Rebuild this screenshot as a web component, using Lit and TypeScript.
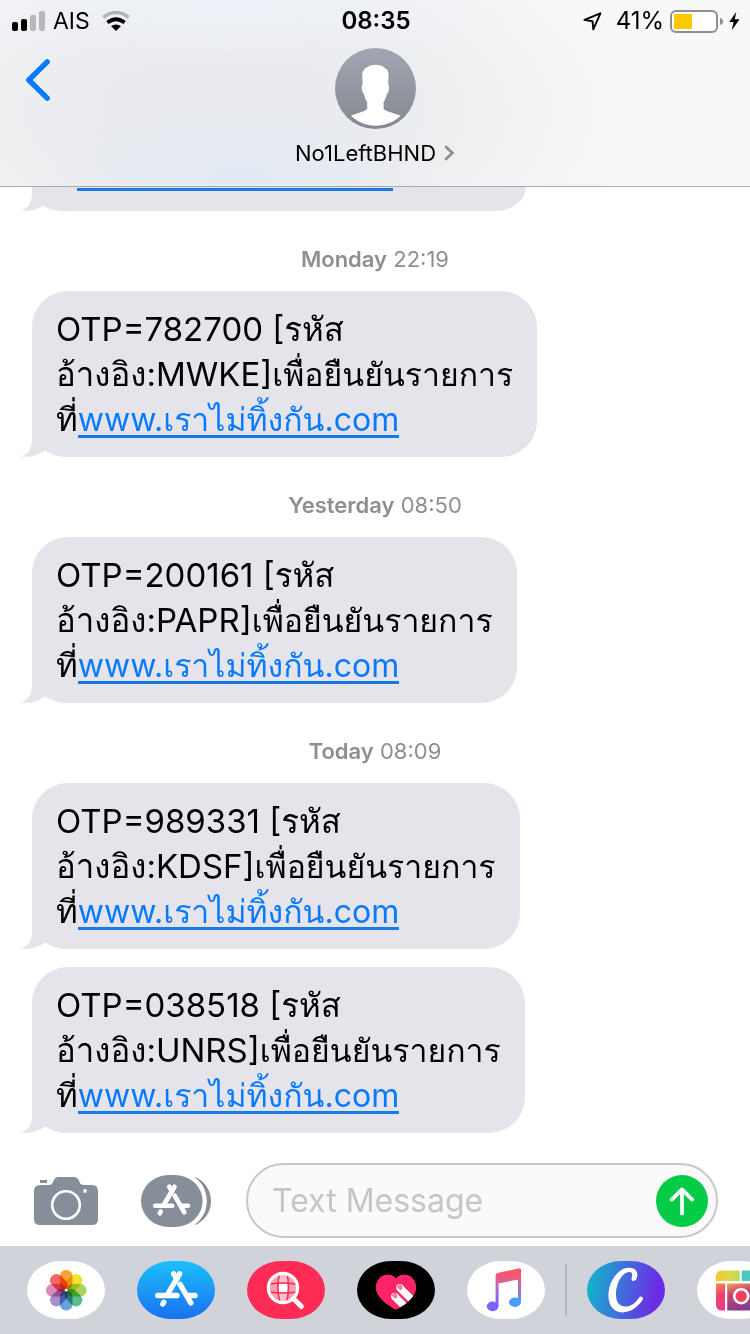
import { LitElement, html, css, svg } from "lit";
import { customElement, property } from "lit/decorators.js";

interface Message {
  otp: string;
  code: string;
}

interface Group {
  day: string;
  time: string;
  messages: Message[];
}

const LINK = "www.เราไม่ทิ้งกัน.com";

const GROUPS: Group[] = [
  { day: "Monday", time: "22:19", messages: [{ otp: "782700", code: "MWKE" }] },
  { day: "Yesterday", time: "08:50", messages: [{ otp: "200161", code: "PAPR" }] },
  {
    day: "Today",
    time: "08:09",
    messages: [
      { otp: "989331", code: "KDSF" },
      { otp: "038518", code: "UNRS" },
    ],
  },
];

const storeGlyph = svg`
  <g fill="none" stroke="#fff" stroke-width="5" stroke-linecap="round">
    <path d="M22.5 11.5 L11.8 29.6 M16.8 11.5 L20 16.5 M22.8 21.3 L33 39" />
    <path d="M1.8 32 H20 M29.6 32 H37" />
    <path d="M7.6 38.3 L6.6 40" />
  </g>`;

const bubbleTail = html`
  <svg class="tail" width="50" height="40" viewBox="0 0 50 40" aria-hidden="true">
    <path
      fill="#e5e4ea"
      d="M11 0 V22 C11 31 8 37 0 39.4 C9 41 18 38 24 33.2 C31 38 38 40 50 40 V0 Z"
    />
  </svg>
`;

const bubbleStyles = css`
  .bubble {
    position: relative;
    isolation: isolate;
    box-sizing: border-box;
    border-radius: 36px;
    background: #e5e4ea;
    color: #000;
  }
  .tail {
    position: absolute;
    z-index: -1;
    left: -11px;
    bottom: 0;
    display: block;
  }
`;

const PETALS = [
  "#f79a1e",
  "#eee21a",
  "#a4cf4a",
  "#4eb87e",
  "#5a9be0",
  "#a283c8",
  "#d880b4",
  "#f25a58",
];

@customElement("message-bubble")
export class MessageBubble extends LitElement {
  @property() otp = "";
  @property() code = "";

  static styles = [
    bubbleStyles,
    css`
      :host {
        display: block;
        width: fit-content;
        max-width: 80%;
      }
      .bubble {
        padding: 16px 24px 15px;
        font-size: 33px;
        line-height: 45px;
      }
      .text {
        margin: 0;
        white-space: nowrap;
      }
      .thai {
        font-size: 32px;
      }
      .link {
        color: #087aff;
        font-size: 32px;
        text-decoration: none;
        background: linear-gradient(#1679e4, #1679e4) left 0 bottom 1px / 100% 3px no-repeat;
      }
    `,
  ];

  render() {
    return html`
      <div class="bubble">
        ${bubbleTail}
        <p class="text">
          OTP=${this.otp} [รหัส<br />อ้างอิง:${this.code}]<span class="thai">เพื่อยืนยันรายการ</span
          ><br />ที่<a class="link" href="#">${LINK}</a>
        </p>
      </div>
    `;
  }
}

@customElement("status-bar")
export class StatusBar extends LitElement {
  static styles = css`
    :host {
      display: grid;
      grid-template-columns: 1fr auto 1fr;
      align-items: center;
      padding: 0 10px 0 12px;
      font-size: 24px;
      line-height: 42px;
    }
    .side {
      display: flex;
      align-items: center;
      gap: 8px;
    }
    .carrier {
      font-size: 23px;
    }
    .end {
      justify-content: flex-end;
      gap: 6px;
    }
    .time {
      font-weight: 600;
    }
    .wifi {
      margin-left: 4px;
    }
    .location {
      margin-right: 8px;
    }
    svg {
      display: block;
      flex: none;
    }
  `;

  render() {
    return html`
      <div class="side">
        <svg width="33" height="20" viewBox="0 0 33 20" role="img" aria-label="Signal">
          <rect x="0" y="11" width="6" height="9" rx="2" />
          <rect x="9" y="8" width="6" height="12" rx="2" />
          <rect x="18" y="4" width="6" height="16" rx="2" fill="#b7b8bb" />
          <rect x="27" y="0" width="6" height="20" rx="2" fill="#b7b8bb" />
        </svg>
        <span class="carrier">AIS</span>
        <svg class="wifi" width="28" height="20" viewBox="0 0 28 20" role="img" aria-label="Wi-Fi">
          <path d="M1.2 6.2 Q14 -3.2 26.8 6.2" fill="none" stroke="#b2b3b6" stroke-width="3.6" />
          <path d="M5.4 11.6 Q14 4.8 22.6 11.6" fill="none" stroke="#000" stroke-width="3.8" />
          <path d="M9 15 Q14 11.8 19 15 L14 20 Z" />
        </svg>
      </div>
      <span class="time">08:35</span>
      <div class="side end">
        <svg class="location" width="19" height="19" viewBox="0 0 19 19" role="img" aria-label="Location">
          <path
            d="M1.4 7.9 L17.4 1.3 L10.3 17.3 L9.5 9.2 Z"
            fill="none"
            stroke="#000"
            stroke-width="1.9"
            stroke-linejoin="round"
          />
        </svg>
        <span>41%</span>
        <svg width="53" height="23" viewBox="0 0 53 23" role="img" aria-label="Battery">
          <rect x="1" y="1" width="46" height="21" rx="5" fill="#fff" stroke="#8e8e90" stroke-width="2" />
          <rect x="4" y="4" width="18" height="15" fill="#fdca00" />
          <path d="M50 8 Q53 9 53 11.5 Q53 14 50 15 Z" fill="#8e8e90" />
        </svg>
        <svg width="11" height="20" viewBox="0 0 12 20" role="img" aria-label="Charging">
          <path d="M8 0 L0.3 11 H5 L3 20 L11.5 8 H6.3 Z" />
        </svg>
      </div>
    `;
  }
}

@customElement("app-dock")
export class AppDock extends LitElement {
  static styles = css`
    :host {
      display: flex;
      align-items: center;
      box-sizing: border-box;
      height: 88px;
      padding-left: 27px;
      background: #d0d3d9;
      overflow: hidden;
    }
    .group {
      display: flex;
      gap: 32px;
    }
    .divider {
      flex: none;
      width: 2px;
      height: 52px;
      margin: 0 20px;
      background: #b4b7bd;
    }
    .app {
      flex: none;
      display: block;
      width: 78px;
      height: 58px;
      padding: 0;
      border: 0;
      border-radius: 34px / 29px;
      overflow: hidden;
      background: #fff;
    }
    .store {
      background: linear-gradient(#1cc1f8, #1a70f2);
    }
    .search {
      background: #ff2d55;
    }
    .touch {
      background: #000;
    }
    .canva {
      background: linear-gradient(100deg, #12b4cc 5%, #3f6fdc 45%, #6c2be4 85%);
    }
    .petal {
      mix-blend-mode: multiply;
    }
    svg {
      display: block;
    }
  `;

  render() {
    return html`
      <div class="group">
        <button class="app" aria-label="Photos">
          <svg width="78" height="58" viewBox="0 0 78 58">
            ${PETALS.map(
              (c, i) => svg`<rect class="petal" x="32.9" y="9" width="12.6" height="19.6" rx="6"
                fill=${c} fill-opacity="0.92" transform=${`rotate(${i * 45} 39.2 29.2)`} />`
            )}
            <circle cx="39.2" cy="29.2" r="1.4" fill="#fff" />
          </svg>
        </button>
        <button class="app store" aria-label="App Store">
          <svg width="78" height="58" viewBox="0 0 78 58">
            <g transform="translate(18.8 0.6) scale(1.06)">${storeGlyph}</g>
          </svg>
        </button>
        <button class="app search" aria-label="Image search">
          <svg width="78" height="58" viewBox="0 0 78 58">
            <circle cx="36" cy="27" r="14" fill="#ff9fb3" />
            <path d="M31 22.7 H41 V13 H31 Z M31 31.3 H41 V41 H31 Z" fill="#ffc0cd" />
            <path d="M31.8 22.7 H40.8 V31.3 H31 Z" fill="#fff" />
            <g fill="none" stroke="#ff2d55" stroke-width="1.6">
              <path d="M22 23.4 Q36 20.5 50 23.4 M22 31 Q36 33 50 31" />
              <path d="M32.6 12 Q29 27 33 42 M40 12 Q43 27 39.6 42" />
            </g>
            <circle cx="36" cy="27" r="14.6" fill="none" stroke="#fff" stroke-width="3.2" />
            <path d="M46.6 37.8 L54.4 45.6" stroke="#fff" stroke-width="5" stroke-linecap="round" />
          </svg>
        </button>
        <button class="app touch" aria-label="Digital Touch">
          <svg width="78" height="58" viewBox="0 0 78 58">
            <defs>
              <clipPath id="heart">
                <path
                  d="M39 17.6 C42 13.2 48 12.6 52 14.6 C58 17.6 61 25.5 58 32 C54.5 39 47 44.5 39 48.8 C31 44.5 23.5 39 20 32 C17 25.5 20 17.6 26 14.6 C30 12.6 36 13.2 39 17.6 Z"
                />
              </clipPath>
            </defs>
            <g clip-path="url(#heart)">
              <rect width="78" height="58" fill="#ff2468" />
              <path d="M43 27 L58 42 M37.8 35.6 L52 49.8" stroke="#fff" stroke-width="7.4" />
              <circle cx="43" cy="26.8" r="3.7" fill="#fff" />
              <circle cx="37.8" cy="35.4" r="3.7" fill="#fff" />
              <path
                d="M41 26.6 a2 2 0 0 1 4 -1 l-.4 2.4 l-1.6 .6 z M35.8 35 a2 2 0 0 1 4 -1 l-.4 2.4 l-1.6 .6 z"
                fill="#ff8fae"
                stroke="#ff2468"
                stroke-width="0.7"
              />
            </g>
          </svg>
        </button>
        <button class="app" aria-label="Music">
          <svg width="78" height="58" viewBox="0 0 78 58">
            <defs>
              <linearGradient id="music" gradientUnits="userSpaceOnUse" x1="46" y1="8" x2="40" y2="50">
                <stop offset="0.1" stop-color="#fb5468" />
                <stop offset="0.4" stop-color="#d262a8" />
                <stop offset="0.7" stop-color="#8a66f4" />
                <stop offset="1" stop-color="#7a62f8" />
              </linearGradient>
              <linearGradient id="stem" gradientUnits="userSpaceOnUse" x1="50" y1="18" x2="50" y2="46">
                <stop offset="0" stop-color="#e85a86" />
                <stop offset="0.5" stop-color="#8a7be0" />
                <stop offset="0.85" stop-color="#479dfb" />
              </linearGradient>
            </defs>
            <ellipse cx="25.6" cy="45.4" rx="5.8" ry="4.8" fill="url(#music)" />
            <path
              d="M28.6 45.4 V14.6 Q28.6 12.6 30.6 12 L52 7.4 Q54 7 54 9.2 V18 L31.6 22.4 V45.4 Z"
              fill="url(#music)"
            />
            <path d="M51 18 H54 V41 H51 Z" fill="url(#stem)" />
            <ellipse cx="48" cy="41.2" rx="5.9" ry="4.8" fill="#479dfb" />
          </svg>
        </button>
      </div>
      <div class="divider"></div>
      <div class="group">
        <button class="app canva" aria-label="Canva">
          <svg width="78" height="58" viewBox="0 0 78 58">
            <path
              fill="#fff"
              d="M50.4 13.4 C50 9 46.6 6.8 42 6.8 C31 6.8 21.4 20.6 21.4 34.6 C21.4 45 27 51.4 35.4 51.4 C43.6 51.4 51.4 46 55.8 38.6 C56.8 36 53.6 34.4 52.2 36.4 C48.4 42.2 43.4 45.6 38.4 45.6 C32.4 45.6 29 41.6 29 33.6 C29 22.4 35 11.6 42 11 C45.4 10.8 45.8 13 44.6 17 C43.6 20.4 48.4 21 49.4 17.8 C50 16.2 50.5 15 50.4 13.4 Z"
            />
          </svg>
        </button>
        <button class="app" aria-label="Layout">
          <svg width="78" height="58" viewBox="0 0 78 58">
            <defs>
              <linearGradient id="warm" x1="0" x2="1">
                <stop offset="0" stop-color="#fbc23c" />
                <stop offset="0.6" stop-color="#d8dc4a" />
                <stop offset="1" stop-color="#b4d860" />
              </linearGradient>
              <linearGradient id="rose" x1="0" y1="0" x2="0.2" y2="1">
                <stop offset="0" stop-color="#fb8a4e" />
                <stop offset="0.5" stop-color="#f2406e" />
                <stop offset="1" stop-color="#ee3a86" />
              </linearGradient>
              <linearGradient id="plum" x1="0" y1="0" x2="0.3" y2="1">
                <stop offset="0" stop-color="#f0a45e" />
                <stop offset="0.4" stop-color="#c8466e" />
                <stop offset="1" stop-color="#8a3a8e" />
              </linearGradient>
            </defs>
            <path d="M19 20 V15.5 Q19 9.6 25 9.6 H42.6 V20 Z" fill="url(#warm)" />
            <path d="M44.8 9.6 H60 V20 H44.8 Z" fill="#4cc8c0" />
            <path d="M19 22.4 H28 V49.6 H25 Q19 49.6 19 43.6 Z" fill="url(#rose)" />
            <path d="M30.2 22.4 H60 V49.6 H30.2 Z" fill="url(#plum)" />
            <circle cx="44.2" cy="35.2" r="7" fill="#f4405c" stroke="#fff" stroke-width="2.6" />
          </svg>
        </button>
      </div>
    `;
  }
}

@customElement("app-root")
export class AppRoot extends LitElement {
  static styles = [
    bubbleStyles,
    css`
      :host {
        display: flex;
        flex-direction: column;
        height: 100vh;
        overflow: hidden;
        background: #fff;
        color: #000;
        font-family: Inter, Loma, "Noto Sans CJK JP", sans-serif;
      }
      .header {
        flex: none;
        border-bottom: 1px solid #a9aaae;
        background: radial-gradient(ellipse 200px 90px at 32% 100%, #e3eaf5 0%, #e3eaf500 100%),
          radial-gradient(ellipse 320px 70px at 30% 0%, #edf1f7 0%, #edf1f700 100%),
          radial-gradient(ellipse 420px 210px at 30% 60%, #e9eaed 0%, #ebecef 40%, #f8f8f800 100%),
          #f8f8f8;
      }
      .nav {
        display: grid;
        grid-template-columns: 1fr auto 1fr;
        padding: 6px 24px 17px;
      }
      .back {
        justify-self: start;
        align-self: start;
        margin-top: 10px;
        padding: 0;
        border: 0;
        background: none;
      }
      .contact {
        display: flex;
        flex-direction: column;
        align-items: center;
        gap: 8px;
        padding: 0;
        border: 0;
        background: none;
        color: inherit;
        font: inherit;
      }
      .name {
        display: flex;
        align-items: center;
        gap: 8px;
        font-size: 22px;
        line-height: 32px;
      }
      svg {
        display: block;
      }
      .thread {
        flex: 1;
        min-height: 0;
        display: flex;
        flex-direction: column;
        justify-content: flex-end;
        overflow: hidden;
        padding: 0 32px;
      }
      .earlier {
        flex: 1;
        width: 72%;
        border-radius: 0 0 36px 36px / 0 0 28px 28px;
      }
      .earlier-link {
        width: 64%;
        height: 3px;
        margin: 1px 0 0 45px;
        background: #1679e4;
      }
      .group {
        flex: none;
        display: flex;
        flex-direction: column;
        gap: 18px;
      }
      .stamp {
        margin: 0;
        padding-top: 34px;
        color: #8e8e93;
        font-size: 22px;
        font-weight: 400;
        line-height: 28px;
        text-align: center;
      }
      .day {
        font-weight: 600;
      }
      .composer {
        flex: none;
        display: flex;
        align-items: center;
        padding: 30px 32px 8px 34px;
      }
      .tool {
        flex: none;
        padding: 0;
        border: 0;
        background: none;
      }
      .apps {
        margin: 0 35px 0 43px;
      }
      .field {
        flex: 1;
        min-width: 0;
        display: flex;
        align-items: center;
        box-sizing: border-box;
        height: 75px;
        padding: 0 8px 0 24px;
        border: 2px solid #c7c7cc;
        border-radius: 38px;
        background: #fafafa;
      }
      .input {
        flex: 1;
        min-width: 0;
        padding: 0;
        border: 0;
        outline: 0;
        background: none;
        font: inherit;
        font-size: 32px;
        line-height: 44px;
      }
      .input::placeholder {
        color: #c5c5ca;
        opacity: 1;
      }
      .send {
        flex: none;
        width: 52px;
        height: 52px;
        padding: 0;
        border: 0;
        border-radius: 50%;
        background: #04cc47;
      }
      .dock {
        flex: none;
      }
    `,
  ];

  render() {
    return html`
      <header class="header">
        <status-bar></status-bar>
        <nav class="nav">
          <button class="back" aria-label="Back">
            <svg width="28" height="44" viewBox="0 0 28 44">
              <path
                d="M23.2 3.8 L4.8 22 L23.2 40.2"
                fill="none"
                stroke="#087aff"
                stroke-width="5.4"
                stroke-linecap="round"
                stroke-linejoin="round"
              />
            </svg>
          </button>
          <button class="contact">
            <svg width="81" height="81" viewBox="0 0 82 82" aria-hidden="true">
              <defs>
                <linearGradient id="av" x1="0" y1="0" x2="0" y2="1">
                  <stop offset="0" stop-color="#a2a6b2" />
                  <stop offset="1" stop-color="#858892" />
                </linearGradient>
              </defs>
              <circle cx="41" cy="41" r="41" fill="url(#av)" />
              <path
                fill="#fff"
                d="M41 17 C46 17 49 18.6 50.6 20.6 C53.6 21.6 54.4 25 54.2 29 L53.8 37 C55.6 37.6 54.8 45 52.4 46.6 C51.8 50 50.6 53 49.2 54.6 V61.4 C51 64.4 60 65.6 66.4 68.6 C60 75 50.6 78.6 41 78.6 C31.4 78.6 23 75 16.2 68.6 C22 65.6 31 64.4 32.6 61.4 V54.6 C31 53 30 50 29.4 46.6 C27 45 26.2 37.6 28 37 L27.6 29 C27.4 24 29 21.4 32.4 19.6 C35 17.8 38 17 41 17 Z"
              />
            </svg>
            <span class="name">
              No1LeftBHND
              <svg width="11" height="16" viewBox="0 0 11 16" aria-hidden="true">
                <path d="M2 2 L8.4 8 L2 14" fill="none" stroke="#8e8e93" stroke-width="2.8" stroke-linecap="round" />
              </svg>
            </span>
          </button>
        </nav>
      </header>

      <main class="thread">
        <div class="bubble earlier">
          ${bubbleTail}
          <div class="earlier-link"></div>
        </div>
        ${GROUPS.map(
          (g) => html`
            <section class="group">
              <h2 class="stamp"><span class="day">${g.day}</span> ${g.time}</h2>
              ${g.messages.map(
                (m) => html`<message-bubble otp=${m.otp} code=${m.code}></message-bubble>`
              )}
            </section>
          `
        )}
      </main>

      <form class="composer" @submit=${(e: Event) => e.preventDefault()}>
        <button class="tool" type="button" aria-label="Camera">
          <svg width="64" height="48" viewBox="0 0 64 48">
            <rect x="6" y="3" width="7" height="3" fill="#868e99" />
            <path
              fill="#868e99"
              d="M6 8 H15 Q18 8 19 5 Q20.5 0 25 0 H39.5 Q44 0 45.5 5 Q46.5 8 49.5 8 H58 Q64 8 64 14 V42 Q64 48 58 48 H6 Q0 48 0 42 V14 Q0 8 6 8 Z"
            />
            <circle cx="32" cy="28" r="13.8" fill="none" stroke="#fff" stroke-width="2.6" />
            <circle cx="51" cy="14" r="1.9" fill="#fff" />
          </svg>
        </button>
        <button class="tool apps" type="button" aria-label="Apps">
          <svg width="70" height="52" viewBox="0 0 70 52">
            <path
              d="M52.6 1.4 C63 5 70 14.4 70 26 C70 37.6 63 47 52.6 50.6 C61 45 65.8 36.4 65.8 26 C65.8 15.6 61 7 52.6 1.4 Z"
              fill="#868e99"
            />
            <rect x="0" y="0" width="61.6" height="52" rx="28" ry="26" fill="#868e99" />
            <g transform="translate(12.6 1) scale(0.93)">${storeGlyph}</g>
          </svg>
        </button>
        <div class="field">
          <input class="input" type="text" placeholder="Text Message" aria-label="Text Message" />
          <button class="send" type="submit" aria-label="Send">
            <svg width="52" height="52" viewBox="0 0 52 52">
              <path
                d="M26 38.4 V14.6 M15.8 24.6 L26 14.4 L36.2 24.6"
                fill="none"
                stroke="#fff"
                stroke-width="3.8"
                stroke-linecap="round"
                stroke-linejoin="round"
              />
            </svg>
          </button>
        </div>
      </form>

      <app-dock class="dock"></app-dock>
    `;
  }
}
